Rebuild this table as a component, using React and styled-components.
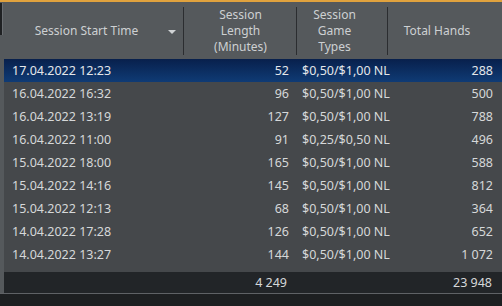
import React from "react";
import styled, { createGlobalStyle } from "styled-components";

const Global = createGlobalStyle`
  html, body { margin: 0; padding: 0; background: #1d1f21; }
  body { font-family: "Noto Sans", "Open Sans", sans-serif; }
`;

const COLS = "180px 113px 91px 1fr";

const Page = styled.div`
  width: 502px;
  height: 306px;
  background: #1d1f21;
  overflow: hidden;
`;

const Frame = styled.div`
  position: relative;
  border-top: 2px solid #e0a23e;
  border-bottom: 1px solid #5f6266;
  background: #55595c;
  padding-left: 4px;
  font-size: 12.5px;
`;

const Stub = styled.div`
  position: absolute;
  left: 0;
  top: 1px;
  width: 2px;
  height: 32px;
  background: #1f2123;
  border-right: 1px solid #6a6e72;
`;

const HeaderRow = styled.div`
  display: grid;
  grid-template-columns: ${COLS};
  height: 57px;
  color: #cdd0d2;
  font-size: 12px;
`;

const HeaderCell = styled.div`
  position: relative;
  display: flex;
  align-items: center;
  justify-content: center;
  text-align: center;
  line-height: 16px;
  padding-right: ${(p) => p.$pr || 0}px;
  &::after {
    content: "";
    display: ${(p) => (p.$last ? "none" : "block")};
    position: absolute;
    right: 0;
    top: 5px;
    bottom: 4px;
    width: 1px;
    background: #2b2d30;
  }
`;

const SortArrow = styled.span`
  position: absolute;
  right: 8px;
  top: 28px;
  width: 0;
  height: 0;
  border-left: 4px solid transparent;
  border-right: 4px solid transparent;
  border-top: 4px solid #d0d3d5;
`;

const Body = styled.div`
  background: #45484b;
  height: 213px;
`;

const Row = styled.div`
  display: grid;
  grid-template-columns: ${COLS};
  height: 23px;
  align-items: center;
  color: ${(p) => (p.$selected ? "#e4e7ea" : "#d6d8d9")};
  background: ${(p) =>
    p.$selected ? "linear-gradient(#08204c, #0f3b75)" : "transparent"};
`;

const Cell = styled.div`
  text-align: ${(p) => p.$align || "left"};
  padding: ${(p) =>
    p.$align === "right" ? `0 ${p.$pr || 8}px 0 0` : `0 0 0 ${p.$pl || 8}px`};
  white-space: nowrap;
`;

const Footer = styled.div`
  display: grid;
  grid-template-columns: ${COLS};
  height: 21px;
  align-items: center;
  background: #222528;
  color: #d6d8d9;
`;

const rows = [
  ["17.04.2022 12:23", "52", "$0,50/$1,00 NL", "288"],
  ["16.04.2022 16:32", "96", "$0,50/$1,00 NL", "500"],
  ["16.04.2022 13:19", "127", "$0,50/$1,00 NL", "788"],
  ["16.04.2022 11:00", "91", "$0,25/$0,50 NL", "496"],
  ["15.04.2022 18:00", "165", "$0,50/$1,00 NL", "588"],
  ["15.04.2022 14:16", "145", "$0,50/$1,00 NL", "812"],
  ["15.04.2022 12:13", "68", "$0,50/$1,00 NL", "364"],
  ["14.04.2022 17:28", "126", "$0,50/$1,00 NL", "652"],
  ["14.04.2022 13:27", "144", "$0,50/$1,00 NL", "1 072"],
];

export default function App() {
  return (
    <Page>
      <Global />
      <Frame>
        <Stub />
        <HeaderRow>
          <HeaderCell $pr={15}>
            Session Start Time
            <SortArrow />
          </HeaderCell>
          <HeaderCell>
            Session
            <br />
            Length
            <br />
            (Minutes)
          </HeaderCell>
          <HeaderCell $pr={16}>
            Session
            <br />
            Game
            <br />
            Types
          </HeaderCell>
          <HeaderCell $last $pr={16}>Total Hands</HeaderCell>
        </HeaderRow>
        <Body>
          {rows.map((r, i) => (
            <Row key={i} $selected={i === 0}>
              <Cell $pl={8}>{r[0]}</Cell>
              <Cell $align="right" $pr={8}>{r[1]}</Cell>
              <Cell $pl={5}>{r[2]}</Cell>
              <Cell $align="right" $pr={9}>{r[3]}</Cell>
            </Row>
          ))}
        </Body>
        <Footer>
          <Cell />
          <Cell $align="right" $pr={10}>4 249</Cell>
          <Cell />
          <Cell $align="right" $pr={10}>23 948</Cell>
        </Footer>
      </Frame>
    </Page>
  );
}
